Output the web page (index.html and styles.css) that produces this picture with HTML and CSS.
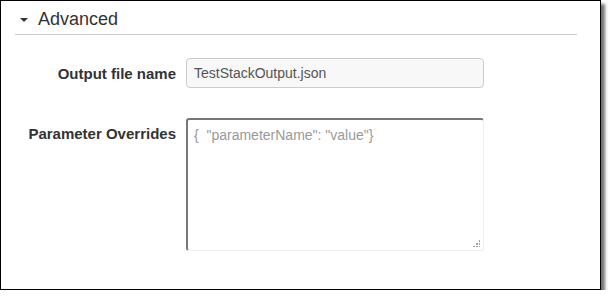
FILE: index.html
```html
<!DOCTYPE html>
<html lang="en">

<head>
    <meta charset="UTF-8">
    <meta name="viewport" content="width=device-width, initial-scale=1.0">
    <title>Advanced</title>
    <link rel="stylesheet" href="styles.css">
</head>

<body>

    <div class="frame">
        <div class="section">
            <div class="section-header">
                <span class="caret"></span>
                <h2>Advanced</h2>
            </div>

            <div class="campo">
                <label for="output_file">Output file name</label>
                <input type="text" id="output_file" value="TestStackOutput.json">
            </div>

            <div class="campo">
                <label for="param_overrides">Parameter Overrides</label>
                <div class="textarea-box">
                    <textarea id="param_overrides" placeholder="{  &quot;parameterName&quot;: &quot;value&quot;}"></textarea>
                    <span class="grip"></span>
                </div>
            </div>
        </div>
    </div>

</body>

</html>
```

FILE: styles.css
```css
body {
    margin: 0;
    background-color: #fff;
    font-family: "Liberation Sans", Arial, sans-serif;
}

.frame {
    width: 601px;
    height: 290px;
    box-sizing: border-box;
    border: 1px solid #000;
    background-color: #fff;
    box-shadow: 4px 4px 3px rgba(0, 0, 0, 0.55);
}

.section {
    padding: 0 23px 0 14px;
}

.section-header {
    display: flex;
    align-items: center;
    box-sizing: border-box;
    height: 34px;
    padding: 4px 0 0 5px;
    border-bottom: 1px solid #ccc;
}

.caret {
    width: 0;
    height: 0;
    border-left: 4px solid transparent;
    border-right: 4px solid transparent;
    border-top: 4px solid #333;
    margin-right: 10px;
    margin-top: 1px;
}

.section-header h2 {
    margin: 0;
    font-size: 18px;
    font-weight: normal;
    color: #333;
}

.campo {
    display: flex;
    align-items: flex-start;
    margin-top: 23px;
}

.campo + .campo {
    margin-top: 30px;
}

.campo label {
    width: 161px;
    margin-right: 10px;
    padding-top: 7px;
    text-align: right;
    font-size: 15px;
    line-height: 17px;
    font-weight: bold;
    color: #333;
}

input[type="text"] {
    width: 298px;
    height: 30px;
    box-sizing: border-box;
    padding: 0 7px;
    border: 1px solid #ccc;
    border-radius: 4px;
    background-color: #f8f8f8;
    font-family: "Liberation Sans", Arial, sans-serif;
    font-size: 14px;
    color: #555;
}

.textarea-box {
    position: relative;
}

textarea {
    display: block;
    width: 298px;
    height: 133px;
    box-sizing: border-box;
    padding: 7px 6px;
    border-style: solid;
    border-width: 2px 1px 1px 2px;
    border-color: #777 #eee #eee #777;
    border-radius: 3px;
    resize: none;
    background-color: #fff;
    font-family: "Liberation Sans", Arial, sans-serif;
    font-size: 14px;
    color: #555;
}

textarea::placeholder {
    color: #999;
}

.grip {
    position: absolute;
    right: 4px;
    bottom: 4px;
    width: 7px;
    height: 7px;
    background:
        radial-gradient(circle, #999 0.7px, transparent 0.8px) 6px 0 / 2px 2px no-repeat,
        radial-gradient(circle, #999 0.7px, transparent 0.8px) 3px 3px / 2px 2px no-repeat,
        radial-gradient(circle, #999 0.7px, transparent 0.8px) 6px 3px / 2px 2px no-repeat,
        radial-gradient(circle, #999 0.7px, transparent 0.8px) 0 6px / 2px 2px no-repeat,
        radial-gradient(circle, #999 0.7px, transparent 0.8px) 3px 6px / 2px 2px no-repeat,
        radial-gradient(circle, #999 0.7px, transparent 0.8px) 6px 6px / 2px 2px no-repeat;
}
```
